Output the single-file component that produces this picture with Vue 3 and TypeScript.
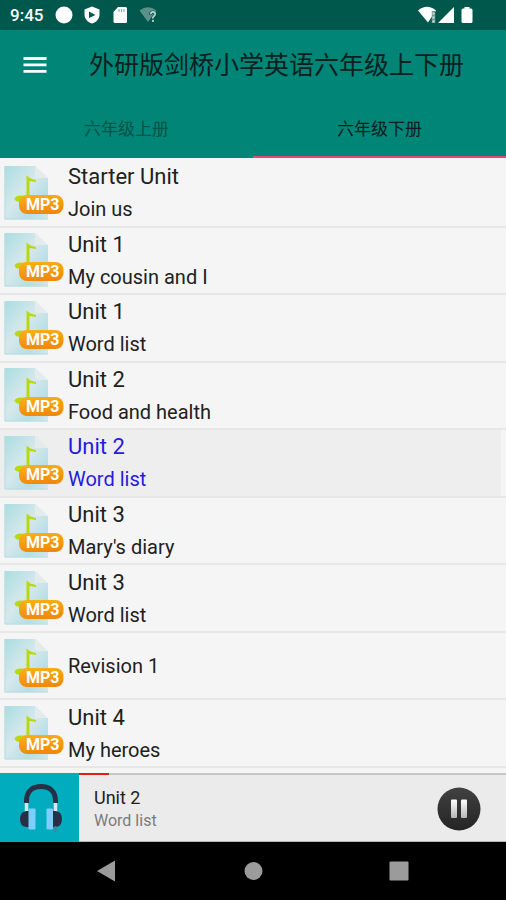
<script setup lang="ts">
import { ref } from 'vue'

interface Track {
  title: string
  subtitle?: string
}

const tabs: string[] = ['六年级上册', '六年级下册']
const activeTab = ref(1)

const tracks: Track[] = [
  { title: 'Starter Unit', subtitle: 'Join us' },
  { title: 'Unit 1', subtitle: 'My cousin and I' },
  { title: 'Unit 1', subtitle: 'Word list' },
  { title: 'Unit 2', subtitle: 'Food and health' },
  { title: 'Unit 2', subtitle: 'Word list' },
  { title: 'Unit 3', subtitle: "Mary's diary" },
  { title: 'Unit 3', subtitle: 'Word list' },
  { title: 'Revision 1' },
  { title: 'Unit 4', subtitle: 'My heroes' },
]
const current = ref(4)
const progress = ref(7)
</script>

<template>
  <div class="screen">
    <div class="status">
      <span class="clock">9:45</span>
      <svg width="18" height="18" viewBox="0 0 18 18"><circle cx="9" cy="9" r="8.5" fill="#fff" /></svg>
      <svg width="18" height="18" viewBox="0 0 18 18">
        <path d="M9 0.5 16.5 3.5V8.5C16.5 13 13 16.5 9 17.5 5 16.5 1.5 13 1.5 8.5V3.5Z" fill="#fff" />
        <path d="M6 5.5 12.5 9 6 12Z" fill="#00574b" />
      </svg>
      <svg width="18" height="18" viewBox="0 0 18 18">
        <path d="M7 1H14.5Q16 1 16 2.5V15.5Q16 17 14.5 17H4Q2.5 17 2.5 15.5V6Z" fill="#fff" />
        <path d="M8 3V6M10.5 3V6M13 3V6" stroke="#8bb3ac" stroke-width="1.2" />
      </svg>
      <svg width="18" height="18" viewBox="0 0 18 18">
        <path d="M0.5 4.5Q9 -2 17.5 4.5L9 16Z" fill="#5b9088" />
        <path d="M11.5 8.5Q11.5 6 14 6T16 8.5Q16 9.5 14.8 10.5T14 13M14 14.5V16" fill="none" stroke="#00574b" stroke-width="3" />
        <path d="M11.8 8Q11.8 5.8 14 5.8T16.2 8Q16.2 9.2 14.8 10.2T14 12.5M14 13.8V16" fill="none" stroke="#b9d3ce" stroke-width="1.7" />
      </svg>
      <span class="spacer"></span>
      <svg width="56" height="18" viewBox="0 0 56 18">
        <path d="M0 4.5Q9 -3 18 4.5L10 16.5Z" fill="#fff" />
        <path d="M15.5 5V17" stroke="#6d9d95" stroke-width="3.5" />
        <path d="M15.5 6.5V8.5M15.5 10.5V12.5M15.5 14.5V16.5" stroke="#d3e3e0" stroke-width="2" />
        <path d="M36 1V17H20Z" fill="#fff" />
        <path d="M46.5 1H51.5V2.5H53Q54.5 2.5 54.5 4V15.5Q54.5 17 53 17H45Q43.5 17 43.5 15.5V4Q43.5 2.5 45 2.5H46.5Z" fill="#fff" />
      </svg>
    </div>

    <header class="appbar">
      <div class="toolbar">
        <button class="menu" type="button" aria-label="Menu">
          <svg width="24" height="18" viewBox="0 0 24 18">
            <path d="M0.5 2.5H23.5M0.5 8.9H23.5M0.5 15.3H23.5" stroke="#fff" stroke-width="2.8" />
          </svg>
        </button>
        <h1>外研版剑桥小学英语六年级上下册</h1>
      </div>
      <nav class="tabs">
        <button
          v-for="(tab, i) in tabs"
          :key="tab"
          type="button"
          class="tab"
          :class="{ active: i === activeTab }"
          @click="activeTab = i"
        >{{ tab }}</button>
      </nav>
    </header>

    <svg class="defs" width="0" height="0" aria-hidden="true">
      <defs>
        <linearGradient id="paper" x1="0" y1="0" x2="1" y2="1">
          <stop offset="0" stop-color="#a9dde1" />
          <stop offset="0.45" stop-color="#d6e8ec" />
          <stop offset="0.75" stop-color="#b5dfe5" />
          <stop offset="1" stop-color="#d5e8ec" />
        </linearGradient>
        <linearGradient id="badge" x1="0" y1="0" x2="0.2" y2="1">
          <stop offset="0" stop-color="#fbb116" />
          <stop offset="1" stop-color="#f18a0b" />
        </linearGradient>
        <linearGradient id="bar" x1="0" y1="0" x2="0" y2="1">
          <stop offset="0" stop-color="#ffffff" />
          <stop offset="1" stop-color="#b5b5b5" />
        </linearGradient>
        <linearGradient id="disc" x1="0" y1="0" x2="0" y2="1">
          <stop offset="0" stop-color="#414141" />
          <stop offset="1" stop-color="#242424" />
        </linearGradient>
      </defs>
    </svg>

    <ul class="list">
      <li v-for="(track, i) in tracks" :key="i">
        <button type="button" class="row" :class="{ playing: i === current }" @click="current = i">
          <svg width="60" height="56" viewBox="0 0 60 56">
            <path d="M31 0.5 44 13H31Z" fill="#e3ebed" />
            <path d="M0.5 1H31V13H44V54.5H0.5Z" fill="url(#paper)" />
            <path d="M1 1.5V54H43.5" fill="none" stroke="#b9dde0" stroke-width="1" />
            <path d="M22.5 10.5 26.5 13.5 32 15V17L25.5 16V33Q24 37 18 37Q11 37 10.5 34Q11 30.5 17 30.5L22.5 31Z" fill="#b8d90f" />
            <rect x="15" y="30" width="44.5" height="19" rx="8" fill="url(#badge)" />
            <text x="22" y="45" class="mp3">MP3</text>
          </svg>
          <span class="lines">
            <span v-if="track.subtitle" class="title">{{ track.title }}</span>
            <span class="subtitle">{{ track.subtitle ?? track.title }}</span>
          </span>
        </button>
      </li>
    </ul>

    <section class="player">
      <div class="cover">
        <svg width="44" height="50" viewBox="0 0 44 50">
          <path d="M7.5 20V18C7.5 8 13.5 3.5 22 3.5S36.5 8 36.5 18V20" fill="none" stroke="#263148" stroke-width="5" />
          <path d="M7.5 20V29M36.5 20V29" stroke="#dbe7ed" stroke-width="3.5" />
          <path d="M10 28H7Q1 29 1 36T7 44H10Z" fill="#263148" />
          <path d="M34 28H37Q43 29 43 36T37 44H34Z" fill="#263148" />
          <rect x="9.5" y="25.5" width="7" height="21" rx="1" fill="#7fcdfa" />
          <rect x="27.5" y="25.5" width="6.5" height="21" rx="1" fill="#7fcdfa" />
          <path d="M36.5 43V49" stroke="#5d7886" stroke-width="2" />
        </svg>
      </div>
      <div class="panel">
        <div class="track"><div class="fill" :style="{ width: progress + '%' }"></div></div>
        <div class="now">
          <div class="info">
            <div class="now-title">Unit 2</div>
            <div class="now-sub">Word list</div>
          </div>
          <button class="pause" type="button" aria-label="Pause">
            <svg width="44" height="44" viewBox="0 0 44 44">
              <circle cx="22" cy="22" r="21.5" fill="url(#disc)" />
              <rect x="14" y="12.5" width="6" height="18.5" rx="1" fill="url(#bar)" />
              <rect x="24" y="12.5" width="6" height="18.5" rx="1" fill="url(#bar)" />
            </svg>
          </button>
        </div>
      </div>
    </section>

    <nav class="sysnav">
      <button type="button" aria-label="Back">
        <svg width="22" height="22" viewBox="0 0 22 22"><path d="M1 11 19 0.5V21.5Z" fill="#9b9b9b" /></svg>
      </button>
      <button type="button" aria-label="Home">
        <svg width="22" height="22" viewBox="0 0 22 22"><circle cx="11.5" cy="11" r="9" fill="#9b9b9b" /></svg>
      </button>
      <button type="button" aria-label="Recent apps">
        <svg width="22" height="22" viewBox="0 0 22 22"><rect x="1.5" y="1.5" width="19" height="19" rx="1" fill="#9b9b9b" /></svg>
      </button>
    </nav>
  </div>
</template>

<style>
body {
  margin: 0;
  background: #f5f5f5;
}
</style>

<style scoped>
.screen {
  display: flex;
  flex-direction: column;
  min-height: 100vh;
  background: #f5f5f5;
  color: #212121;
  font-family: Roboto, "Noto Sans CJK SC", sans-serif;
}
button {
  margin: 0;
  padding: 0;
  border: 0;
  background: none;
  color: inherit;
  font: inherit;
  cursor: pointer;
}
svg {
  display: block;
  flex: none;
}
.defs {
  position: absolute;
}
.status {
  display: flex;
  align-items: center;
  gap: 10px;
  height: 30px;
  padding: 0 32px 0 10px;
  background: #00574b;
  color: #fff;
}
.clock {
  margin-right: 2px;
  font-size: 17px;
  font-weight: 500;
  line-height: 32px;
}
.spacer {
  flex: 1;
}
.appbar {
  background: #008577;
  color: #08211e;
}
.toolbar {
  display: flex;
  align-items: center;
  height: 70px;
  padding-left: 23px;
}
h1 {
  margin: 2px 0 0 42px;
  font-size: 25px;
  font-weight: 400;
  line-height: 36px;
  white-space: nowrap;
}
.tabs {
  display: flex;
}
.tab {
  flex: 1;
  height: 58px;
  padding-top: 1px;
  border-bottom: 2px solid transparent;
  font-size: 17px;
  line-height: 24px;
  color: #045348;
}
.tab.active {
  border-color: #d8506c;
  color: #08211e;
}
.list {
  display: grid;
  flex: 1;
  grid-auto-rows: 1fr;
  margin: 0;
  padding: 2px 0 5px;
  list-style: none;
}
li {
  display: grid;
  border-bottom: 2px solid #e7e7e7;
}
.row {
  display: flex;
  align-items: center;
  gap: 4px;
  margin-right: 5px;
  padding-left: 4px;
  text-align: left;
}
.playing {
  background: #eeeeee;
  color: #261bdc;
}
.mp3 {
  fill: #fff;
  font-family: Roboto, sans-serif;
  font-size: 16px;
  font-weight: 700;
}
.title,
.subtitle {
  display: block;
}
.title {
  font-size: 22px;
  line-height: 33px;
}
.subtitle {
  font-size: 20px;
  line-height: 32px;
}
.player {
  display: flex;
  height: 69px;
  background: #ebebeb;
}
.cover {
  display: flex;
  align-items: center;
  justify-content: center;
  width: 79px;
  padding-left: 2px;
  box-sizing: border-box;
  background: #00acbd;
}
.panel {
  display: flex;
  flex: 1;
  flex-direction: column;
  border-bottom: 1px solid #b5b5b5;
}
.track {
  height: 2px;
  background: #c6c6c6;
}
.fill {
  height: 100%;
  background: #e0201b;
}
.now {
  display: flex;
  flex: 1;
  align-items: center;
  justify-content: space-between;
  padding: 2px 25px 0 15px;
}
.now-title {
  font-size: 18px;
  line-height: 24px;
}
.now-sub {
  color: #7b7b7b;
  font-size: 16px;
  line-height: 22px;
}
.sysnav {
  display: flex;
  align-items: center;
  justify-content: center;
  gap: 124px;
  height: 58px;
  background: #000;
}
</style>
